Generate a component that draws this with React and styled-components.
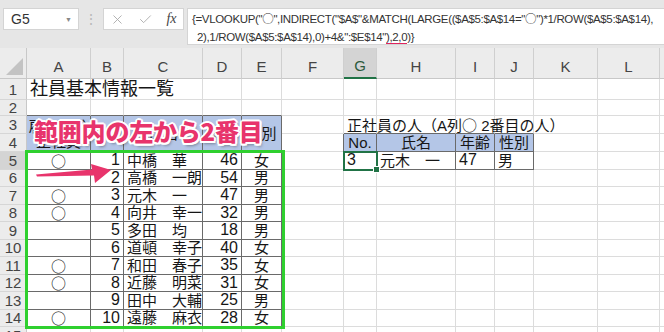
import React from "react"
import styled, { createGlobalStyle } from "styled-components"
import { X, Check } from "lucide-react"

const GlobalStyle = createGlobalStyle`
  html, body {
    margin: 0;
    padding: 0;
    background: #fff;
  }
  body {
    width: 664px;
    height: 332px;
    overflow: hidden;
    font-family: "Liberation Sans", "Noto Sans CJK JP", sans-serif;
  }
`

const COLS = [27, 64, 33, 79, 39, 40, 62, 33, 79, 39, 39, 64, 62, 10]
const LETTERS = ["A", "B", "C", "D", "E", "F", "G", "H", "I", "J", "K", "L", ""]
const GRID = "#dcdcdc"
const LINE = "#6a6a6a"
const BLUE = "#b4c6e7"

const Page = styled.div`
  position: relative;
  width: 664px;
  height: 332px;
  overflow: hidden;
`

const Toolbar = styled.div`
  height: 48px;
  background: #e6e6e6;
  display: flex;
  align-items: flex-start;
  padding-top: 8px;
  box-sizing: border-box;
`

const NameBox = styled.div`
  margin-left: 3px;
  width: 76px;
  height: 22px;
  box-sizing: border-box;
  background: #fff;
  border: 1px solid #d4d4d4;
  display: flex;
  align-items: center;
  justify-content: space-between;
  padding: 0 6px 0 7px;
  font-size: 14px;
  color: #333;
`

const Caret = styled.span`
  font-size: 7px;
  color: #888;
`

const Grip = styled.span`
  width: 24px;
  text-align: center;
  color: #b8b8b8;
  font-size: 14px;
  line-height: 22px;
`

const FuncBox = styled.div`
  width: 81px;
  height: 22px;
  background: #fff;
  border: 1px solid #d4d4d4;
  box-sizing: border-box;
  display: flex;
  align-items: center;
  justify-content: space-around;
  color: #a8a8a8;
`

const Fx = styled.span`
  font-family: "Liberation Serif", serif;
  font-style: italic;
  font-size: 14px;
  color: #444;
`

const FormulaBox = styled.div`
  margin-left: 3px;
  flex: 1;
  height: 37px;
  background: #fff;
  border: 1px solid #d4d4d4;
  border-right: none;
  box-sizing: border-box;
  padding: 1px 0 0 4px;
  font-size: 11.5px;
  letter-spacing: -0.35px;
  line-height: 18px;
  color: #333;
  white-space: nowrap;
  overflow: hidden;
`

const FormulaLine = styled.div`
  padding-left: ${p => p.$indent || 0}px;
`

const Mark = styled.span`
  border-bottom: 2px solid #e0245e;
`

const Circle = styled.span`
  font-family: "Noto Sans CJK JP", sans-serif;
  line-height: 1;
`

const Sheet = styled.div`
  display: grid;
  grid-template-columns: ${COLS.map(c => c + "px").join(" ")};
  grid-template-rows: 31px 21px 16px 18px 18px repeat(11, 17.5px);
`

const Corner = styled.div`
  background: #ececec;
  border-right: 1px solid #c8c8c8;
  border-bottom: 1px solid #c8c8c8;
  box-sizing: border-box;
  position: relative;
  &::after {
    content: "";
    position: absolute;
    right: 3px;
    bottom: 3px;
    border-left: 17px solid transparent;
    border-bottom: 17px solid #c3c3c3;
  }
`

const ColHead = styled.div`
  box-sizing: border-box;
  background: ${p => (p.$active ? "#d4d4d4" : "#ececec")};
  border-right: 1px solid #cfcfcf;
  border-bottom: ${p => (p.$active ? "2px solid #217346" : "1px solid #c8c8c8")};
  display: flex;
  align-items: center;
  justify-content: center;
  padding-top: 6px;
  font-size: 15px;
  color: ${p => (p.$active ? "#2b5a3c" : "#444")};
`

const RowHead = styled.div`
  box-sizing: border-box;
  background: ${p => (p.$active ? "#d4d4d4" : "#ececec")};
  border-right: 1px solid #c8c8c8;
  border-bottom: 1px solid #d6d6d6;
  display: flex;
  align-items: center;
  justify-content: center;
  font-size: 15px;
  line-height: 1;
  color: #444;
  overflow: hidden;
`

const Cell = styled.div`
  box-sizing: border-box;
  grid-row: span ${p => p.$rows || 1};
  border-right: 1px solid ${p => p.$br || GRID};
  border-bottom: 1px solid ${p => p.$bb || GRID};
  background: ${p => p.$bg || "#fff"};
  display: flex;
  flex-direction: column;
  justify-content: center;
  align-items: ${p => p.$align || "flex-start"};
  padding: 0 3px;
  font-size: ${p => p.$size || 15}px;
  line-height: 1;
  color: #161616;
  white-space: nowrap;
  position: relative;
  z-index: ${p => (p.$spill ? 1 : 0)};
`

const Sur = styled.span`
  display: inline-block;
  width: 45px;
`

const Callout = styled.div`
  position: absolute;
  left: 34px;
  top: 113px;
  font-family: "Noto Sans CJK JP", sans-serif;
  font-weight: 900;
  font-size: 24px;
  letter-spacing: -0.2px;
  color: #e8346c;
  white-space: nowrap;
  text-shadow: 2px 0 0 #fff, -2px 0 0 #fff, 0 2px 0 #fff, 0 -2px 0 #fff,
    1.5px 1.5px 0 #fff, -1.5px -1.5px 0 #fff, 1.5px -1.5px 0 #fff,
    -1.5px 1.5px 0 #fff, 2px 3px 3px rgba(0, 0, 0, 0.35);
`

const Frame = styled.div`
  position: absolute;
  left: 25px;
  top: 150px;
  width: 260px;
  height: 179px;
  box-sizing: border-box;
  border: 3px solid #2fd02f;
  pointer-events: none;
`

const Selection = styled.div`
  position: absolute;
  left: 343px;
  top: 151px;
  width: 35px;
  height: 20px;
  box-sizing: border-box;
  border: 2px solid #217346;
  &::after {
    content: "";
    position: absolute;
    right: -4px;
    bottom: -4px;
    width: 5px;
    height: 5px;
    background: #217346;
    border: 1px solid #fff;
  }
`

const Arrow = styled.svg`
  position: absolute;
  left: 34px;
  top: 160px;
  overflow: visible;
`

const staff = [
  ["○", 1, "中橋", "華", 46, "女"],
  ["", 2, "高橋", "一朗", 54, "男"],
  ["○", 3, "元木", "一", 47, "男"],
  ["○", 4, "向井", "幸一", 32, "男"],
  ["", 5, "多田", "均", 18, "男"],
  ["", 6, "道頓", "幸子", 40, "女"],
  ["○", 7, "和田", "春子", 35, "女"],
  ["○", 8, "近藤", "明菜", 31, "女"],
  ["", 9, "田中", "大輔", 25, "男"],
  ["○", 10, "遠藤", "麻衣", 28, "女"],
]

const blanks = (n, key) =>
  Array.from({ length: n }, (_, i) => <Cell key={key + i} />)

const buildCells = () => {
  const out = []
  // column headers
  out.push(<Corner key="corner" />)
  LETTERS.forEach((l, i) =>
    out.push(
      <ColHead key={"h" + i} $active={l === "G"}>
        {l}
      </ColHead>
    )
  )

  // row 1
  out.push(<RowHead key="r1">1</RowHead>)
  out.push(
    <Cell key="a1" $spill $size={18}>
      社員基本情報一覧
    </Cell>
  )
  out.push(...blanks(12, "r1-"))

  // row 2
  out.push(<RowHead key="r2">2</RowHead>)
  for (let i = 0; i < 5; i++) out.push(<Cell key={"r2a" + i} $bb={LINE} />)
  out.push(...blanks(8, "r2b"))

  // rows 3-4: left table header spans two rows
  out.push(<RowHead key="r3">3</RowHead>)
  out.push(
    <Cell key="a3" $rows={2} $bg={BLUE} $br={LINE} $bb={LINE} $align="center">
      <span>雇用区分</span>
      <span>正社員</span>
    </Cell>
  )
  ;["No.", "氏名", "年齢", "性別"].forEach((t, i) =>
    out.push(
      <Cell key={"h3" + i} $rows={2} $bg={BLUE} $br={LINE} $bb={LINE} $align="center">
        {t}
      </Cell>
    )
  )
  out.push(<Cell key="f3" />)
  out.push(
    <Cell key="g3" $spill $bb={LINE}>
      <span>
        正社員の人（A列<Circle>○</Circle> 2番目の人）
      </span>
    </Cell>
  )
  for (let i = 0; i < 3; i++) out.push(<Cell key={"r3c" + i} $bb={LINE} />)
  out.push(...blanks(3, "r3d"))

  out.push(<RowHead key="r4">4</RowHead>)
  out.push(<Cell key="f4" $br={LINE} />)
  ;["No.", "氏名", "年齢", "性別"].forEach((t, i) =>
    out.push(
      <Cell key={"g4" + i} $bg={BLUE} $br={LINE} $bb={LINE} $align="center">
        {t}
      </Cell>
    )
  )
  out.push(...blanks(3, "r4e"))

  // data rows 5-14
  staff.forEach(([mark, no, sur, given, age, sex], i) => {
    const r = i + 5
    out.push(
      <RowHead key={"rh" + r} $active={r === 5}>
        {r}
      </RowHead>
    )
    out.push(
      <Cell key={"a" + r} $br={LINE} $bb={LINE} $align="center">
        {mark && <Circle>{mark}</Circle>}
      </Cell>
    )
    out.push(
      <Cell key={"b" + r} $br={LINE} $bb={LINE} $align="flex-end" $size={16}>
        {no}
      </Cell>
    )
    out.push(
      <Cell key={"c" + r} $br={LINE} $bb={LINE}>
        <span>
          <Sur>{sur}</Sur>
          {given}
        </span>
      </Cell>
    )
    out.push(
      <Cell key={"d" + r} $br={LINE} $bb={LINE} $align="flex-end" $size={16}>
        {age}
      </Cell>
    )
    out.push(
      <Cell key={"e" + r} $br={LINE} $bb={LINE} $align="center">
        {sex}
      </Cell>
    )
    if (r === 5) {
      out.push(<Cell key="f5" $br={LINE} />)
      ;["3", "元木　一", "47", "男"].forEach((t, j) =>
        out.push(
          <Cell key={"g5" + j} $br={LINE} $bb={LINE} $size={j === 0 || j === 2 ? 16 : 15}>
            {t}
          </Cell>
        )
      )
      out.push(...blanks(3, "r5e"))
    } else {
      out.push(...blanks(8, "r" + r + "f"))
    }
  })

  out.push(<RowHead key="r15">15</RowHead>)
  out.push(...blanks(13, "r15"))
  return out
}

const App = () => (
  <Page>
    <GlobalStyle />
    <Toolbar>
      <NameBox>
        G5
        <Caret>▼</Caret>
      </NameBox>
      <Grip>⋮</Grip>
      <FuncBox>
        <X size={15} strokeWidth={1.4} />
        <Check size={15} strokeWidth={1.4} />
        <Fx>fx</Fx>
      </FuncBox>
      <FormulaBox>
        <FormulaLine>
          {'{=VLOOKUP("'}
          <Circle>○</Circle>
          {'",INDIRECT("$A$"&MATCH(LARGE(($A$5:$A$14="'}
          <Circle>○</Circle>
          {'")*1/ROW($A$5:$A$14),'}
        </FormulaLine>
        <FormulaLine $indent={5}>
          {'2),1/ROW($A$5:$A$14),0)+4&":$E$14"'}
          <Mark>),2,0</Mark>
          {")}"}
        </FormulaLine>
      </FormulaBox>
    </Toolbar>
    <Sheet>{buildCells()}</Sheet>

    <Selection />
    <Frame />
    <Arrow width="80" height="26" viewBox="0 0 80 26">
      <path
        d="M2 14.5 L58 9.5 L57 4 L77 10 L61 23 L60 15.5 L3 16.5 Z"
        fill="#e8346c"
      />
    </Arrow>
    <Callout>範囲内の左から2番目</Callout>
  </Page>
)

export default App
